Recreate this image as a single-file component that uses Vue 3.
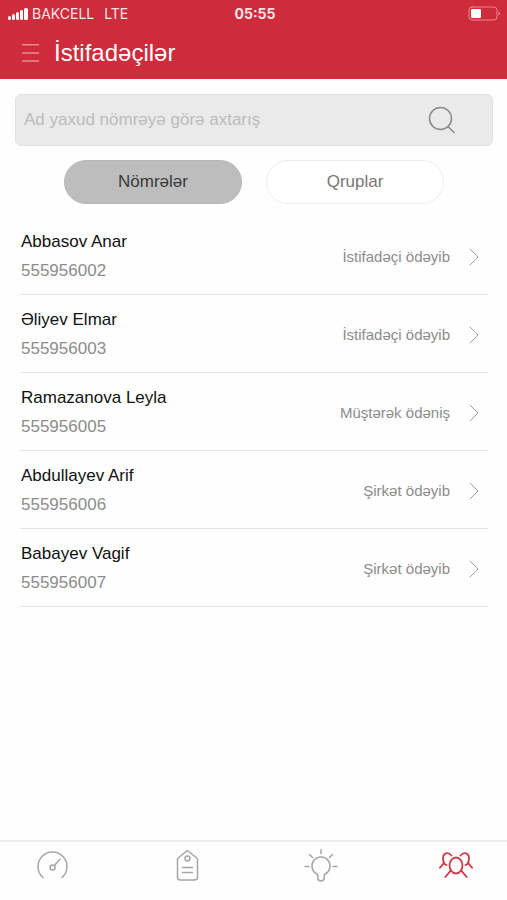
<template>
  <div class="app">
    <header class="header">
      <div class="status">
        <div class="carrier">
          <svg class="signal" viewBox="0 0 20 14" aria-hidden="true">
            <rect x="0" y="9" width="3" height="4" rx="1.5" />
            <rect x="4" y="7" width="3" height="6" rx="1.5" />
            <rect x="8" y="5" width="3" height="8" rx="1.5" />
            <rect x="12" y="3" width="3" height="10" rx="1.5" />
            <rect x="16" y="1" width="4" height="12" rx="1.5" />
          </svg>
          <span>BAKCELL</span>
          <span class="network">LTE</span>
        </div>
        <time class="clock">05:55</time>
        <svg class="battery" viewBox="0 0 34 16" aria-hidden="true">
          <rect x="1" y="1" width="28" height="13" rx="3" fill="none" stroke="#e98a93" />
          <rect x="3" y="3" width="10" height="9" rx="1" fill="#fff" />
          <path d="M30.5 5.500v4q1.500-.5 1.500-2T30.500 5.500z" fill="#e98a93" />
        </svg>
      </div>
      <div class="title-bar">
        <button class="menu" type="button" aria-label="Menyu">
          <svg viewBox="0 0 18 18">
            <path d="M0 .8h17M0 9h17M0 17h17" />
          </svg>
        </button>
        <h1>İstifadəçilər</h1>
      </div>
    </header>

    <main class="content">
      <label class="search">
        <input v-model="query" type="text" placeholder="Ad yaxud nömrəyə görə axtarış" aria-label="Axtarış" />
        <svg viewBox="0 0 28 28" aria-hidden="true">
          <circle cx="12.500" cy="12.500" r="11" />
          <path d="M20 20.500l6 6" />
        </svg>
      </label>

      <div class="tabs">
        <button
          v-for="tab in tabs"
          :key="tab"
          type="button"
          :class="{ active: tab === activeTab }"
          @click="activeTab = tab"
        >
          {{ tab }}
        </button>
      </div>

      <ul class="users">
        <li v-for="user in filteredUsers" :key="user.number">
          <a href="#" @click.prevent>
            <div class="info">
              <span class="name">{{ user.name }}</span>
              <span class="number">{{ user.number }}</span>
            </div>
            <span class="payer">{{ user.payer }}</span>
            <svg class="chevron" viewBox="0 0 10 18" aria-hidden="true">
              <path d="M1 1l8 8-8 8" />
            </svg>
          </a>
        </li>
      </ul>
    </main>

    <nav class="bottom-nav">
      <a href="#" aria-label="Balans" @click.prevent>
        <svg viewBox="0 0 36 36">
          <path d="M9 28.500A14.500 14.500 0 1 1 28 28.500" />
          <circle cx="18.500" cy="18.500" r="2.500" />
          <path d="M20.500 16.500l5.500-6.500" />
        </svg>
      </a>
      <a href="#" aria-label="Tariflər" @click.prevent>
        <svg viewBox="0 0 36 36">
          <path d="M18.300 1.500l9.500 7.500q.7.5.7 1.500V28q0 3-3 3h-14q-3 0-3-3V10.500q0-1 .7-1.500z" />
          <circle cx="18.500" cy="9.500" r="2.500" />
          <path d="M13.500 18.500h10M13.500 23.500h10" />
        </svg>
      </a>
      <a href="#" aria-label="Xidmətlər" @click.prevent>
        <svg viewBox="0 0 36 36">
          <path d="M14.800 28.800v-2.300c0-.7-.3-1.100-1-1.500a9 9 0 1 1 8.400 0c-.7.4-1 .8-1 1.500v2.300a3.200 3.200 0 0 1-6.400 0z" />
          <path d="M18 .8v3.700M6.500 5.500l3 3M29.500 5.500l-3 3M2 17.500h4M30 17.500h4" />
        </svg>
      </a>
      <a href="#" class="current" aria-label="İstifadəçilər" @click.prevent>
        <svg viewBox="0 0 36 36">
          <ellipse cx="18" cy="16.500" rx="6.500" ry="8" />
          <path d="M12.700 21.700L7.300 28M23.300 21.700l5.400 6.300" />
          <path d="M13.500 6.500C10 2.500 5 4 5 9.500c0 2 .5 3.700 1.500 5M5.500 14.500L2 18.700M5.500 14.500L8.500 16" />
          <path d="M22.500 6.500C26 2.500 31 4 31 9.500c0 2-.5 3.700-1.500 5M30.500 14.500L34 18.700M30.500 14.500L27.500 16" />
        </svg>
      </a>
    </nav>
  </div>
</template>

<script setup>
import { computed, ref } from 'vue';

const query = ref('');

const tabs = ['Nömrələr', 'Qruplar'];
const activeTab = ref(tabs[0]);

const users = [
  { name: 'Abbasov Anar', number: '555956002', payer: 'İstifadəçi ödəyib' },
  { name: 'Əliyev Elmar', number: '555956003', payer: 'İstifadəçi ödəyib' },
  { name: 'Ramazanova Leyla', number: '555956005', payer: 'Müştərək ödəniş' },
  { name: 'Abdullayev Arif', number: '555956006', payer: 'Şirkət ödəyib' },
  { name: 'Babayev Vagif', number: '555956007', payer: 'Şirkət ödəyib' }
];

const filteredUsers = computed(() => {
  const q = query.value.trim().toLowerCase();
  return users.filter((u) => u.name.toLowerCase().includes(q) || u.number.includes(q));
});
</script>

<style>
body {
  margin: 0;
  background: #fefefe;
}
</style>

<style scoped>
.app {
  display: flex;
  flex-direction: column;
  min-height: 100vh;
  font-family: "Liberation Sans", Arial, sans-serif;
  font-size: 17px;
  color: #111;
}

svg {
  display: block;
  fill: none;
  stroke-linecap: round;
  stroke-linejoin: round;
}

button {
  font: inherit;
  cursor: pointer;
}

a {
  color: inherit;
  text-decoration: none;
}

.header {
  background: #ce2b3b;
  color: #fff;
}

.status {
  display: grid;
  grid-template-columns: 1fr auto 1fr;
  align-items: center;
  height: 28px;
  padding: 0 5px 0 8px;
  box-sizing: border-box;
  font-family: Inter, "Liberation Sans", sans-serif;
  font-size: 14px;
  line-height: 16px;
  color: #fbe3e5;
}

.carrier {
  display: flex;
  align-items: center;
  gap: 4px;
}

.signal {
  width: 20px;
  height: 14px;
  fill: #fff;
}

.network {
  margin-left: 6px;
}

.clock {
  font-weight: 700;
}

.battery {
  width: 34px;
  height: 16px;
  justify-self: end;
}

.title-bar {
  display: flex;
  align-items: center;
  gap: 14px;
  height: 51px;
  padding: 0 22px 2px;
  box-sizing: border-box;
}

.menu {
  padding: 0;
  border: 0;
  background: none;
}

.menu svg {
  width: 18px;
  height: 18px;
  stroke: #f3bcc1;
  stroke-linecap: butt;
}

h1 {
  margin: 0;
  font-size: 24px;
  font-weight: 400;
  line-height: 28px;
}

.content {
  flex: 1;
}

.search {
  display: flex;
  align-items: center;
  height: 52px;
  margin: 15px 14px 14px 15px;
  padding: 0 36px 0 8px;
  box-sizing: border-box;
  border: 1px solid #e2e4e4;
  border-radius: 6px;
  background: #eaeaea;
}

.search input {
  flex: 1;
  min-width: 0;
  padding: 0;
  border: 0;
  outline: 0;
  background: none;
  font: inherit;
  color: #444;
}

.search input::placeholder {
  color: #bcbcbc;
  opacity: 1;
}

.search svg {
  width: 28px;
  height: 28px;
  stroke: #8a8a8a;
  stroke-width: 1.5;
}

.tabs {
  display: grid;
  grid-template-columns: 1fr 1fr;
  gap: 24px;
  padding: 0 63px 0 64px;
}

.tabs button {
  height: 44px;
  padding: 0;
  border: 1px solid #ededed;
  border-radius: 22px;
  background: #fff;
  color: #777;
}

.tabs .active {
  border-color: #b8b8b8;
  background: #bdbdbd;
  color: #3a3a3a;
}

.users {
  margin: 13px 19px 13px 20px;
  padding: 0;
  list-style: none;
}

.users a {
  display: flex;
  align-items: center;
  height: 78px;
  padding: 2px 9px 0 1px;
  box-sizing: border-box;
  border-bottom: 1px solid #e6e6e6;
}

.info {
  display: flex;
  flex: 1;
  flex-direction: column;
  gap: 9px;
  line-height: 20px;
}

.number {
  color: #8c8c8c;
}

.payer {
  font-size: 15px;
  color: #8c8c8c;
}

.chevron {
  width: 10px;
  height: 18px;
  margin-left: 19px;
  stroke: #a0a0a0;
}

.bottom-nav {
  display: flex;
  justify-content: space-between;
  height: 60px;
  padding: 7px 33px 0 34px;
  box-sizing: border-box;
  border-top: 2px solid #ebebeb;
}

.bottom-nav svg {
  width: 36px;
  height: 36px;
  stroke: #a6a6a6;
  stroke-width: 1.5;
}

.bottom-nav .current svg {
  stroke: #cf3848;
  stroke-width: 1.8;
}
</style>
